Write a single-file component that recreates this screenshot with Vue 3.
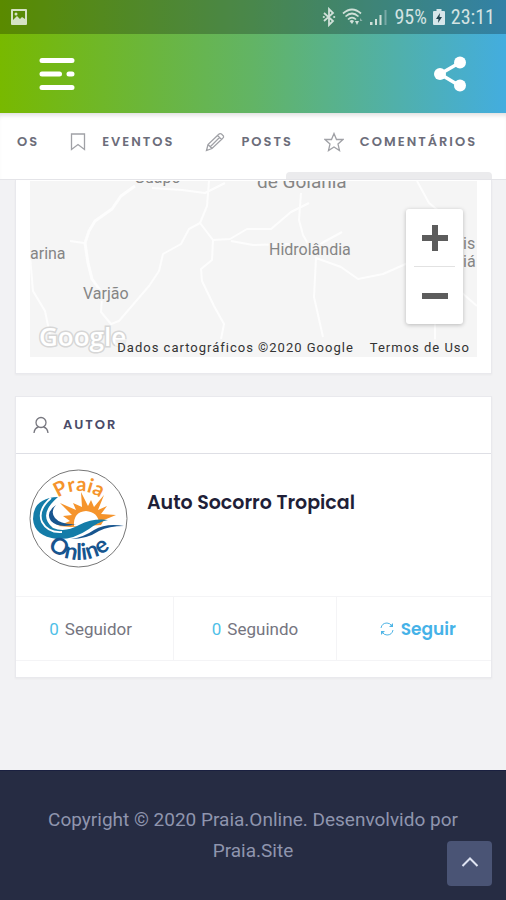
<script setup>
import { ref } from 'vue'

const tabs = [
  { label: 'EVENTOS', icon: 'bookmark' },
  { label: 'POSTS', icon: 'pencil' },
  { label: 'COMENTÁRIOS', icon: 'star' },
]
const stats = [
  { count: 0, label: 'Seguidor' },
  { count: 0, label: 'Seguindo' },
]
const following = ref(false)
const toTop = () => window.scrollTo({ top: 0 })
</script>

<template>
  <div class="page">
    <header class="top">
      <div class="status">
        <svg class="status-photo" viewBox="0 0 18 18" width="18" height="18" aria-hidden="true">
          <path fill-rule="evenodd" fill="#d5e2c4" d="M2 1h14a1 1 0 0 1 1 1v14a1 1 0 0 1-1 1H2a1 1 0 0 1-1-1V2a1 1 0 0 1 1-1zM3 3v9l4-4 3 3 2-2 3 2V3z" />
          <circle cx="6" cy="6" r="1.5" fill="#d5e2c4" />
        </svg>
        <div class="status-right">
          <svg viewBox="0 0 14 20" width="14" height="20" aria-hidden="true">
            <path d="M2 6l9 8-4 4V2l4 4-9 8" fill="none" stroke="#cfe0d8" stroke-width="1.8" />
            <circle cx="1.8" cy="10" r="1.1" fill="#cfe0d8" /><circle cx="12.2" cy="10" r="1.1" fill="#cfe0d8" />
          </svg>
          <svg viewBox="0 0 22 20" width="22" height="20" aria-hidden="true">
            <g fill="none" stroke="#cfe0d8" stroke-width="1.7">
              <path d="M1 6.500Q10 -1.500 19 6.500M3.500 9.500Q10 3.500 16.500 9.500M6 12.500Q10 8.500 14 12.500" />
            </g>
            <path d="M7.500 14Q10 12 12 14L10 17z" fill="#cfe0d8" />
            <path d="M13 14h4l-2 4z" fill="#cfe0d8" /><path d="M18 11l2.500 3H18z" fill="#8fb5ac" />
          </svg>
          <svg viewBox="0 0 18 20" width="18" height="20" aria-hidden="true">
            <path d="M0 15h2.500v3H0zM5 12h2v6H5zM9.500 8h2v10h-2z" fill="#cfe0d8" />
            <path d="M14.500 3h2v15h-2z" fill="#79a9a6" />
          </svg>
          <span class="status-text">95%</span>
          <svg viewBox="0 0 12 20" width="12" height="20" aria-hidden="true">
            <path d="M3.500 2h5v2H11a1 1 0 0 1 1 1v12a1 1 0 0 1-1 1H1a1 1 0 0 1-1-1V5a1 1 0 0 1 1-1h2.500z" fill="#d6e6ea" />
            <path d="M7 6L3 12h2.500L5 16l4-6H6.500z" fill="#20434e" />
          </svg>
          <span class="status-text clock">23:11</span>
        </div>
      </div>
      <div class="appbar">
        <button class="icon-btn" type="button" aria-label="Menu">
          <svg viewBox="0 0 36 34" width="36" height="34">
            <path d="M3 3.500h30M3 17h17.500M30 17h3M3 30.500h30" stroke="#fff" stroke-width="5" stroke-linecap="round" />
          </svg>
        </button>
        <button class="icon-btn" type="button" aria-label="Compartilhar">
          <svg viewBox="0 0 34 36" width="34" height="36">
            <path d="M27 6.500L7 18l20 12" fill="none" stroke="#fff" stroke-width="3.500" />
            <circle cx="27" cy="6.500" r="6" fill="#fff" /><circle cx="7" cy="18" r="6" fill="#fff" /><circle cx="27" cy="29.500" r="6" fill="#fff" />
          </svg>
        </button>
      </div>
    </header>

    <nav class="tabs">
      <div class="tab-row">
        <a class="tab" href="#anuncios">OS</a>
        <a v-for="t in tabs" :key="t.label" class="tab" :href="'#' + t.icon">
          <svg v-if="t.icon === 'bookmark'" viewBox="0 0 16 20" width="16" height="20" aria-hidden="true">
            <path d="M1.500 2h13v15.500L8 12.500l-6.500 5z" />
          </svg>
          <svg v-else-if="t.icon === 'pencil'" viewBox="0 0 20 20" width="20" height="20" aria-hidden="true">
            <path d="M1.500 18.500L3 12.500 13.500 2.500Q15 1 16.500 2L18.500 4Q19 5.500 17.500 6.500L7 16.500zM3 12.500l4 4M12.500 3.500l4 4M5.500 14.500L14.500 5.500" />
          </svg>
          <svg v-else viewBox="0 0 20 20" width="20" height="20" aria-hidden="true">
            <path d="M10 1.500l2.500 6h6.500l-5 4.500 1.500 6.500L10 15l-5.500 3.500L6 12 1 7.500h6.500z" />
          </svg>
          <span>{{ t.label }}</span>
        </a>
      </div>
      <div class="scroll-thumb"></div>
    </nav>

    <main class="content">
      <section class="card map-card">
        <div class="map">
          <svg class="map-art" viewBox="0 0 447 176" preserveAspectRatio="xMinYMin slice" role="img" aria-label="Mapa">
            <rect width="447" height="176" fill="#f5f5f5" />
            <g fill="none" stroke="#fdfdfd" stroke-width="3" stroke-linejoin="round">
              <path d="M105 5L91 15 82 28 65 40 59 50 55 62 58 82 62 98 72 112" />
              <path d="M122 7l30 2 23 3 20-10M179 0l-2 25-7 17-11 6-8 15-18 10-4 17-10 15-30 35-8 3-10-12 1-15" stroke-width="2" />
              <path d="M170 42l13 17-1 20-11 9 1 12 12 25 10 18-3 15M183 59l17-1 17-10h24l20-17 18-9M201 60l22 4 38-1" stroke-width="2" />
              <path d="M271 12l-2 27 4 15 13 23-2 39 9 40M286 77l25 9 17 12 25-5 25-11 23 6 22 16 24 21M387 0l12 22 22 18M405 140v28M282 74l10-12 20-11" stroke-width="2" />
              <path d="M0 75l3 35 12 20 5 24M40 60l14 2" stroke-width="2" />
            </g>
            <g class="place">
              <text x="104" y="2">Guapó</text>
              <text class="big" x="227" y="7">de Goiânia</text>
              <text x="0" y="78">arina</text>
              <text x="53" y="118">Varjão</text>
              <text x="239" y="74">Hidrolândia</text>
              <text x="433" y="68">is</text>
              <text x="433" y="86">iá</text>
            </g>
            <text class="google" x="9" y="165">Google</text>
          </svg>
          <div class="zoom">
            <button type="button" aria-label="Aumentar">
              <svg viewBox="0 0 26 26" width="26" height="26"><path d="M0 13h26M13 0v26" stroke="#5c5c5c" stroke-width="6" /></svg>
            </button>
            <button type="button" aria-label="Diminuir">
              <svg viewBox="0 0 26 26" width="26" height="26"><path d="M0 13h26" stroke="#5c5c5c" stroke-width="6" /></svg>
            </button>
          </div>
          <div class="credits">
            <span>Dados cartográficos ©2020 Google</span>
            <a href="#termos">Termos de Uso</a>
          </div>
        </div>
      </section>

      <section class="card">
        <h2 class="card-title">
          <svg viewBox="0 0 16 18" width="16" height="18" aria-hidden="true">
            <circle cx="8" cy="6.500" r="5" /><path d="M1 17q.5-5 4.500-6M15 17q-.5-5-4.500-6" />
          </svg>
          <span>AUTOR</span>
        </h2>
        <div class="author">
          <svg class="logo" viewBox="0 0 100 100" width="100" height="100" role="img" aria-label="Praia Online">
            <defs>
              <path id="arc-top" d="M15 57A35 35 0 0 1 85 57" />
              <path id="arc-bottom" d="M9 67A47 47 0 0 0 91 67" />
            </defs>
            <circle cx="49.500" cy="49.500" r="48.500" fill="#fff" stroke="#777" />
            <path fill="#f5942c" d="M42 58L29 57l12-5-7-5 9-1-12-12 16 7-3-7 9 4-1-15 7 14 3-6 3 7 10-12-6 15 9-4-6 8 15 1-12 5-3 5z" />
            <path fill="#fff" d="M45 57q-1-14 12-15 12 1 13 12l-10 3z" />
            <path fill="#147ca8" d="M29 28Q4 29 4 50q1 17 24 20 16 1 32-10 9-7 19-9-15-2-29 5-14 8-26 3Q8 46 29 28z" />
            <path fill="none" stroke="#fff" stroke-width="1.800" d="M22 29Q8 41 13 53q6 11 20 10" />
            <path fill="#17558f" d="M27 36q-11 8-5 16 8 8 25 3-15 1-21-6-5-6 1-13z" />
            <path fill="#17558f" d="M42 70q13-2 23-9 12-7 30-4-15 0-25 5-12 8-28 8z" />
            <text class="logo-top"><textPath href="#arc-top" startOffset="50%">Praia</textPath></text>
            <text class="logo-bottom"><textPath href="#arc-bottom" startOffset="50%">Online</textPath></text>
          </svg>
          <h3>Auto Socorro Tropical</h3>
        </div>
        <div class="stats">
          <div v-for="s in stats" :key="s.label" class="stat"><b>{{ s.count }}</b> {{ s.label }}</div>
          <button class="stat follow" type="button" :aria-pressed="following" @click="following = !following">
            <svg viewBox="0 0 14 14" width="14" height="14" aria-hidden="true">
              <path d="M1 6Q2 1 7 1q3 0 5 3M13 8q-1 5-6 5-3 0-5-3" fill="none" stroke="#4fb5e6" />
              <path d="M13 1v4H9zM1 13V9h4z" fill="#4fb5e6" />
            </svg>
            Seguir
          </button>
        </div>
      </section>
    </main>

    <footer class="footer">
      <p>Copyright © 2020 Praia.Online. Desenvolvido por Praia.Site</p>
      <button class="to-top" type="button" aria-label="Voltar ao topo" @click="toTop">
        <svg viewBox="0 0 18 16" width="18" height="16"><path d="M1.500 10L9 2.500l7.500 7.500" fill="none" stroke="#dfe4f2" stroke-width="2" /></svg>
      </button>
    </footer>
  </div>
</template>

<style>
body { background: #f2f2f4; }
</style>

<style scoped>
.page { min-height: 100vh; display: flex; flex-direction: column; font-family: Roboto, "Liberation Sans", sans-serif; }
button { border: 0; padding: 0; background: none; font: inherit; cursor: pointer; }
a { color: inherit; text-decoration: none; }
svg { display: block; flex: none; }

.top { background: linear-gradient(90deg, #78b900 0%, #62b465 50%, #43addf 100%); }
.status { height: 34px; padding: 0 11px 0 10px; display: flex; align-items: center; justify-content: space-between; background: rgba(0, 0, 0, 0.25); }
.status-right { display: flex; align-items: center; gap: 6px; color: #d3e3e2; }
.status-text { font-family: "Roboto Condensed", Roboto, sans-serif; font-size: 20px; line-height: 20px; }
.appbar { height: 79px; padding: 0 39px; display: flex; align-items: center; justify-content: space-between; }

.tabs { height: 67px; box-sizing: border-box; background: #fff; border-bottom: 1px solid #e4e4e8; box-shadow: inset 0 5px 5px -3px rgba(0, 0, 0, 0.14); display: flex; flex-direction: column; justify-content: space-between; overflow: hidden; }
.tab-row { height: 57px; padding-left: 17px; display: flex; align-items: center; gap: 31px; }
.tab { display: flex; align-items: center; gap: 16px; white-space: nowrap; font: 600 13px/20px Poppins, Inter, sans-serif; letter-spacing: 2px; color: #6c6d7a; }
.tab svg path { fill: none; stroke: #a0a1a6; stroke-width: 1.3; }
.scroll-thumb { width: 206px; height: 7px; margin-right: 14px; align-self: flex-end; border-radius: 4px 4px 0 0; background: #ebebed; }

.content { flex: 1; padding: 0 14px 91px 15px; display: flex; flex-direction: column; gap: 22px; }
.card { background: #fff; border: 1px solid #e9e9ed; box-shadow: 0 1px 2px rgba(0, 0, 0, 0.04); }
.map-card { border-top: 0; padding: 1px 14px 16px; }
.map { position: relative; height: 176px; overflow: hidden; }
.map-art { width: 100%; height: 100%; }
.place { font-size: 16px; fill: #858585; stroke: #f5f5f5; stroke-width: 3px; paint-order: stroke; }
.place .big { font-size: 19px; }
.google { font: 600 26px "Open Sans", sans-serif; fill: #fff; stroke: #d6d6d6; stroke-width: 3px; paint-order: stroke; }
.zoom { position: absolute; top: 28px; right: 14px; width: 57px; padding: 0 8px; box-sizing: border-box; background: #fff; border-radius: 3px; box-shadow: 0 1px 4px rgba(0, 0, 0, 0.25); }
.zoom button { width: 100%; height: 57px; display: grid; place-items: center; }
.zoom button + button { border-top: 1px solid #e2e2e2; height: 58px; }
.credits { position: absolute; right: 0; bottom: 0; padding: 0 7px 0 2px; display: flex; gap: 16px; font-size: 13px; line-height: 18px; letter-spacing: 1px; color: #333; background: rgba(245, 245, 245, 0.7); }

.card-title { margin: 0; height: 56px; padding: 0 17px; border-bottom: 1px solid #dedfe5; display: flex; align-items: center; gap: 14px; font: 600 13px/20px Poppins, Inter, sans-serif; letter-spacing: 2px; color: #4a4b68; }
.card-title svg { fill: none; stroke: #77777f; stroke-width: 1.3; }
.author { padding: 15px 13px 27px; display: flex; gap: 18px; }
.author h3 { margin: 20px 0 0; font: 600 19px/28px Poppins, Inter, sans-serif; color: #1f1f38; }
.logo-top, .logo-bottom { font-family: Lato, sans-serif; font-weight: 700; text-anchor: middle; }
.logo-top { font-size: 20px; fill: #f5942c; }
.logo-bottom { font-size: 23px; fill: #17558f; }
.stats { display: grid; grid-template-columns: 157fr 162fr 155fr; margin-bottom: 16px; border-top: 1px solid #f4f4f6; border-bottom: 1px solid #f4f4f6; }
.stat { height: 63px; display: flex; align-items: center; justify-content: center; gap: 6px; font-size: 17px; line-height: 24px; color: #75757f; }
.stat:first-child { box-sizing: border-box; padding-right: 8px; }
.stat + .stat { border-left: 1px solid #f4f4f6; }
.stat b { font-weight: 400; color: #4fbfe8; }
.stat.follow { padding-left: 8px; gap: 7px; font: 600 17px/24px Poppins, Inter, sans-serif; color: #45b2e8; }

.footer { position: relative; padding: 33px 40px 34px; background: #262c43; border-top: 1px solid #1a2040; }
.footer p { margin: 0; text-align: center; font-size: 19px; line-height: 31px; color: #8f95ae; }
.to-top { position: absolute; right: 14px; bottom: 14px; width: 45px; height: 45px; display: grid; place-items: center; border-radius: 4px; background: #4a5475; }
</style>
